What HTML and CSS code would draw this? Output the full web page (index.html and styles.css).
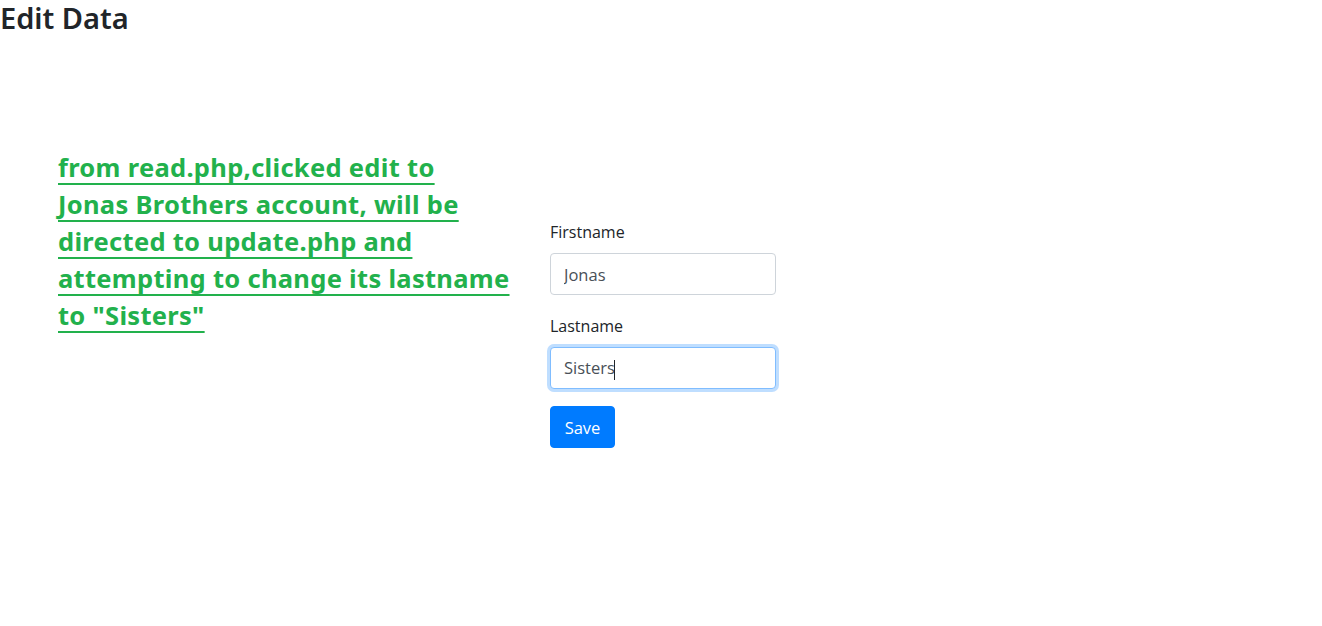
FILE: index.html
```html
<!DOCTYPE html>
<html lang="en">
<head>
<meta charset="utf-8">
<title>Edit Data</title>
<link rel="stylesheet" href="styles.css">
</head>
<body>
<h2 class="title">Edit Data</h2>
<div class="main">
  <div class="note-col">
    <a class="note" href="#">from read.php,clicked edit to<br>Jonas Brothers account, will be<br>directed to update.php and<br>attempting to change its lastname<br>to "Sisters"</a>
  </div>
  <form class="edit-form">
    <div class="form-group">
      <label class="form-label" for="fn">Firstname</label>
      <input class="form-control" id="fn" type="text" value="Jonas">
    </div>
    <div class="form-group last">
      <label class="form-label" for="ln">Lastname</label>
      <div class="form-control focused">Sisters<span class="caret"></span></div>
    </div>
    <button class="btn-save" type="button">Save</button>
  </form>
</div>
</body>
</html>
```
FILE: styles.css
```css
html, body {
  margin: 0;
  padding: 0;
  background: #fff;
}
body {
  font-family: "Open Sans", "Noto Sans", sans-serif;
  color: #212529;
}
.title {
  margin: 0;
  font-family: "Noto Sans", sans-serif;
  font-weight: 600;
  font-size: 29px;
  line-height: 36px;
  color: #212529;
}
.main {
  display: flex;
  padding-top: 113px;
}
.note-col {
  width: 448px;
  padding-left: 58px;
  margin-right: 2px;
  white-space: nowrap;
}
.note {
  font-family: "Noto Sans", sans-serif;
  font-weight: 700;
  font-size: 25.5px;
  line-height: 37px;
  letter-spacing: 0.3px;
  color: #22b14c;
  text-decoration: underline;
  text-underline-offset: 6px;
  text-decoration-thickness: 2px;
}
.edit-form {
  margin-left: 42px;
  padding-top: 71px;
  width: 226px;
}
.form-group {
  margin-bottom: 19px;
}
.form-group.last {
  margin-bottom: 17px;
}
.form-label {
  display: block;
  font-size: 16px;
  line-height: 24px;
  margin-bottom: 9px;
  color: #212529;
}
.form-control {
  display: block;
  box-sizing: border-box;
  width: 226px;
  height: 42px;
  padding: 0 13px;
  font-family: "Open Sans", sans-serif;
  font-size: 16.5px;
  line-height: 40px;
  color: #495057;
  background: #fff;
  border: 1px solid #ced4da;
  border-radius: 4px;
  outline: none;
}
.form-control.focused {
  border-color: #80bdff;
  box-shadow: 0 0 0 3px rgba(0, 123, 255, 0.25);
}
.caret {
  display: inline-block;
  width: 1px;
  height: 20px;
  background: #212529;
  vertical-align: middle;
  margin-left: -1px;
}
.btn-save {
  display: block;
  box-sizing: border-box;
  width: 65px;
  height: 42px;
  padding: 0;
  font-family: "Open Sans", sans-serif;
  font-size: 16.5px;
  color: #fff;
  background: #007bff;
  border: 1px solid #007bff;
  border-radius: 4px;
}
```
